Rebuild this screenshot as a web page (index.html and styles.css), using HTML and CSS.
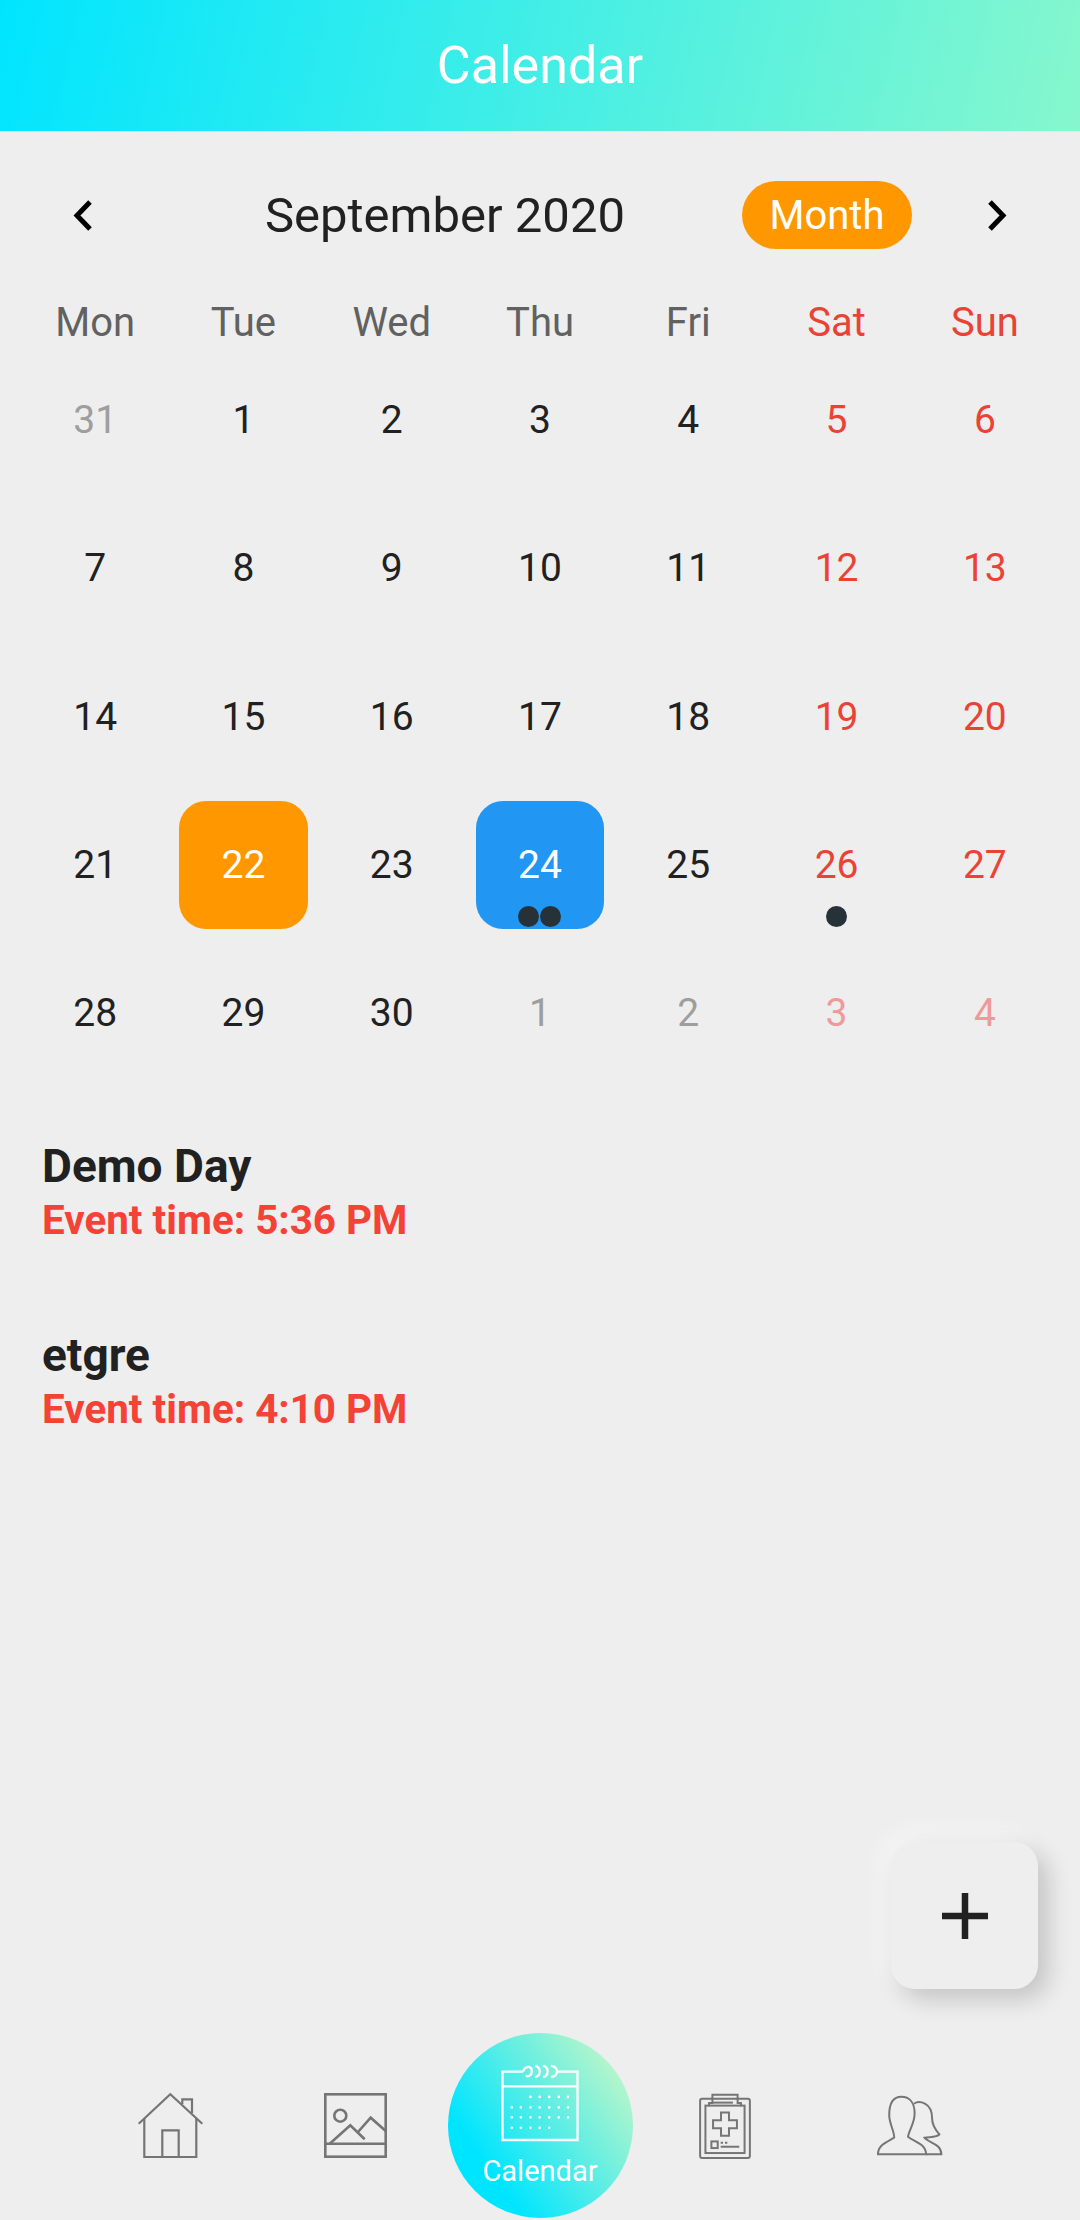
FILE: index.html
```html
<!DOCTYPE html>
<html lang="en">
<head>
    <meta charset="UTF-8">
    <meta name="viewport" content="width=device-width, initial-scale=1.0">
    <title>Calendar</title>
    <link rel="stylesheet" href="styles.css">
</head>
<body>
    <div class="page">
        <header class="app-bar">Calendar</header>

        <div class="month-bar">
            <svg class="chevron" viewBox="0 0 20 31"><path d="M17 2 L4 15.5 L17 29"/></svg>
            <span class="month-title">September 2020</span>
            <span class="format-btn">Month</span>
            <svg class="chevron chevron-next" viewBox="0 0 20 31"><path d="M3 2 L16 15.5 L3 29"/></svg>
        </div>

        <div class="calendar">
            <div class="dow">Mon</div>
            <div class="dow">Tue</div>
            <div class="dow">Wed</div>
            <div class="dow">Thu</div>
            <div class="dow">Fri</div>
            <div class="dow weekend">Sat</div>
            <div class="dow weekend">Sun</div>

            <div class="day outside">31</div>
            <div class="day">1</div>
            <div class="day">2</div>
            <div class="day">3</div>
            <div class="day">4</div>
            <div class="day weekend">5</div>
            <div class="day weekend">6</div>

            <div class="day">7</div>
            <div class="day">8</div>
            <div class="day">9</div>
            <div class="day">10</div>
            <div class="day">11</div>
            <div class="day weekend">12</div>
            <div class="day weekend">13</div>

            <div class="day">14</div>
            <div class="day">15</div>
            <div class="day">16</div>
            <div class="day">17</div>
            <div class="day">18</div>
            <div class="day weekend">19</div>
            <div class="day weekend">20</div>

            <div class="day">21</div>
            <div class="day today">22</div>
            <div class="day">23</div>
            <div class="day selected">24
                <div class="markers"><i></i><i></i></div>
            </div>
            <div class="day">25</div>
            <div class="day weekend">26
                <div class="markers"><i></i></div>
            </div>
            <div class="day weekend">27</div>

            <div class="day">28</div>
            <div class="day">29</div>
            <div class="day">30</div>
            <div class="day outside">1</div>
            <div class="day outside">2</div>
            <div class="day outside weekend">3</div>
            <div class="day outside weekend">4</div>
        </div>

        <ul class="event-list">
            <li>
                <div class="event-name">Demo Day</div>
                <div class="event-time">Event time: 5:36 PM</div>
            </li>
            <li>
                <div class="event-name">etgre</div>
                <div class="event-time">Event time: 4:10 PM</div>
            </li>
        </ul>

        <button class="fab">
            <svg viewBox="0 0 46 46"><path d="M23 0 V46 M0 23 H46"/></svg>
        </button>

        <nav class="bottom-nav">
            <div class="nav-item">
                <svg class="nav-icon home-icon" viewBox="0 0 65 65">
                    <path d="M0.7 30.7 L32.3 1.3 L64.3 30.7"/>
                    <path d="M6.3 25 V64 H58.3 V25"/>
                    <path d="M24.3 64 V37.3 H40.7 V64"/>
                    <path d="M44.3 11 V6.3 H54 V20"/>
                </svg>
            </div>
            <div class="nav-item">
                <svg class="nav-icon image-icon" viewBox="0 0 63 65">
                    <rect x="1.3" y="1.3" width="60.4" height="62.4"/>
                    <path d="M1.3 50.7 H61.7"/>
                    <circle cx="16.3" cy="22.7" r="6"/>
                    <path d="M5.7 50.7 L26.3 32.3 L40.7 46.3"/>
                    <path d="M34 39 L46.7 24.7 L61.7 38"/>
                </svg>
            </div>
            <div class="nav-item">
                <div class="nav-active">
                    <svg class="cal-icon" viewBox="210 155 242 240">
                        <path d="M280 181 H217 V389 H445 V181 H385"/>
                        <path d="M217 226 H445"/>
                        <path d="M280 181 C284 166 305 160 306 178 C307 192 296 198 288 194"/>
                        <path d="M316 164 C335 168 335 194 316 198"/>
                        <path d="M340 164 C359 168 359 194 340 198"/>
                        <path d="M364 164 C389 168 389 194 364 198"/>
                        <path class="cal-dots" d="M302 258h0M330 258h0M359 258h0M388 258h0M416 258h0
                            M245 290h0M273 290h0M302 290h0M330 290h0M359 290h0M388 290h0M416 290h0
                            M245 320h0M273 320h0M302 320h0M330 320h0M359 320h0M388 320h0M416 320h0
                            M245 352h0M273 352h0M302 352h0M330 352h0M359 352h0"/>
                    </svg>
                    <span class="nav-label">Calendar</span>
                </div>
            </div>
            <div class="nav-item">
                <svg class="nav-icon clip-icon" viewBox="86 101 156 199">
                    <rect x="89" y="118" width="150" height="179" rx="6"/>
                    <rect x="105" y="139" width="118" height="143"/>
                    <path d="M116 141 V131 H126 V106 H202 V131 H212 V141"/>
                    <path d="M126 130 H188"/>
                    <path d="M152 160 H176 V183 H200 V207 H176 V230 H152 V207 H128 V183 H152 Z"/>
                    <rect x="123" y="247" width="19" height="20"/>
                    <path d="M151 251 H158 M164 251 H171"/>
                    <path d="M151 263 H207"/>
                </svg>
            </div>
            <div class="nav-item">
                <svg class="nav-icon people-icon" viewBox="618 110 200 182">
                    <path d="M621 288 C621 262 640 255 670 238 C672 222 655 195 655 170 C655 130 670 114 692 114 C715 114 732 130 732 165 C732 195 715 215 712 235 C730 250 765 255 767 288 Z"/>
                    <path d="M730 135 C745 125 785 130 785 180 C785 200 800 220 807 228 C800 238 775 235 762 238 C775 255 812 255 813 288 H767"/>
                </svg>
            </div>
        </nav>
    </div>
</body>
</html>
```

FILE: styles.css
```css
* {
    box-sizing: border-box;
}
body {
    margin: 0;
    background-color: #eeeeee;
    font-family: Roboto, "Noto Sans", sans-serif;
    color: #212121;
}
.page {
    position: relative;
    height: 2220px;
    display: flex;
    flex-direction: column;
    overflow: hidden;
}
.app-bar {
    height: 131px;
    display: flex;
    align-items: center;
    justify-content: center;
    background: linear-gradient(103deg, #00e5ff, #86f7cd);
    color: #fff;
    font-size: 52px;
}

/* month header */
.month-bar {
    height: 168px;
    padding: 0 73px;
    display: flex;
    align-items: center;
}
.chevron {
    width: 20px;
    height: 31px;
    fill: none;
    stroke: #000;
    stroke-width: 5;
}
.chevron-next {
    margin-left: 75px;
}
.month-title {
    margin-left: 172px;
    font-size: 49px;
}
.format-btn {
    margin-left: auto;
    width: 170px;
    height: 68px;
    display: flex;
    align-items: center;
    justify-content: center;
    border-radius: 34px;
    background-color: #ff9800;
    color: #fff;
    font-size: 40px;
}

/* calendar grid */
.calendar {
    padding: 0 21px;
    display: grid;
    grid-template-columns: repeat(7, 1fr);
    grid-template-rows: 47px repeat(5, 148.3px);
}
.dow {
    display: flex;
    align-items: center;
    justify-content: center;
    font-size: 40px;
    color: #616161;
}
.day {
    position: relative;
    display: flex;
    align-items: center;
    justify-content: center;
    font-size: 39px;
}
.dow.weekend,
.day.weekend {
    color: #ea4335;
}
.day.outside {
    color: #9e9e9e;
}
.day.outside.weekend {
    color: #ef9a9a;
}
.day.today,
.day.selected {
    margin: 10px 10px 10px;
    padding-bottom: 1px;
    border-radius: 27px;
    color: #fff;
}
.day.today {
    background-color: #ff9800;
}
.day.selected {
    background-color: #2196f3;
}
.markers {
    position: absolute;
    left: 0;
    right: 0;
    top: 115px;
    display: flex;
    justify-content: center;
    gap: 1px;
}
.day.selected .markers {
    top: 105px;
}
.markers i {
    width: 21px;
    height: 21px;
    border-radius: 50%;
    background-color: #263238;
}

/* events */
.event-list {
    list-style: none;
    margin: 0;
    padding: 50px 42px 0;
    display: flex;
    flex-direction: column;
    gap: 80px;
}
.event-name {
    font-size: 46px;
    line-height: 58px;
    font-weight: 700;
}
.event-time {
    font-size: 40.4px;
    line-height: 51px;
    font-weight: 700;
    color: #f44336;
}

.fab {
    position: absolute;
    left: 891px;
    top: 1842px;
    width: 147px;
    height: 147px;
    padding: 0;
    display: flex;
    align-items: center;
    justify-content: center;
    border: none;
    border-radius: 24px;
    background-color: #eeeeee;
    box-shadow: 10px 10px 24px rgba(0, 0, 0, 0.18), -10px -10px 24px rgba(255, 255, 255, 0.45);
}
.fab svg {
    width: 46px;
    height: 46px;
    fill: none;
    stroke: #212121;
    stroke-width: 6.5;
}

/* bottom nav */
.bottom-nav {
    margin-top: auto;
    padding-bottom: 2px;
    display: grid;
    grid-template-columns: repeat(5, 185px);
    justify-content: center;
    align-items: center;
}
.nav-item {
    display: flex;
    align-items: center;
    justify-content: center;
}
.nav-icon {
    fill: none;
    stroke: #757575;
    stroke-width: 2.2;
    overflow: visible;
}
.home-icon {
    width: 65px;
    height: 65px;
}
.image-icon {
    width: 63px;
    height: 65px;
    stroke-width: 2.6;
}
.clip-icon {
    width: 52px;
    height: 66px;
    stroke-width: 6;
}
.people-icon {
    width: 66px;
    height: 61px;
    stroke-width: 6;
}
.nav-active {
    width: 185px;
    height: 185px;
    padding-top: 30px;
    display: flex;
    flex-direction: column;
    align-items: center;
    gap: 13px;
    border-radius: 50%;
    background: linear-gradient(55deg, #00e5ff 24%, #b9f6ca 88%);
}
.cal-icon {
    width: 80px;
    height: 79px;
    fill: none;
    stroke: #fff;
    stroke-width: 7;
}
.cal-icon .cal-dots {
    stroke-width: 8;
    stroke-linecap: round;
}
.nav-label {
    color: #fff;
    font-size: 29px;
    line-height: 32px;
}
```
